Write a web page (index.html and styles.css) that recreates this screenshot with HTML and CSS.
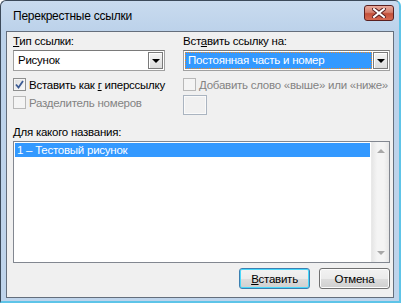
FILE: index.html
```html
<!DOCTYPE html>
<html lang="ru">
<head>
  <meta charset="UTF-8">
  <title>Перекрестные ссылки</title>
  <link rel="stylesheet" href="styles.css">
</head>
<body>
  <div class="window">
    <div class="titlebar">
      <span class="title">Перекрестные ссылки</span>
      <button class="close" type="button" aria-label="Закрыть">
        <svg width="14" height="10" viewBox="0 0 14 10">
          <path d="M2 1 L12 9 M12 1 L2 9" stroke="#5a2020" stroke-width="4" stroke-linecap="square"/>
          <path d="M2 1 L12 9 M12 1 L2 9" stroke="#fff" stroke-width="2" stroke-linecap="square"/>
        </svg>
      </button>
    </div>

    <div class="client">
      <div class="columns">
        <div class="col col-left">
          <div class="label"><u>Т</u>ип ссылки:</div>
          <div class="combo">
            <span class="combo-text">Рисунок</span>
            <span class="combo-btn"><span class="arrow"></span></span>
          </div>
          <label class="check">
            <span class="box checked">
              <svg width="9" height="9" viewBox="0 0 9 9"><path d="M1 4.5 L3.5 7.5 L8 1" fill="none" stroke="#3b5a93" stroke-width="1.8"/></svg>
            </span>
            Вставить как <u>г</u>иперссылку
          </label>
          <label class="check disabled">
            <span class="box"></span>
            Разделитель номеров
          </label>
        </div>

        <div class="col col-right">
          <div class="label">Вст<u>а</u>вить ссылку на:</div>
          <div class="combo">
            <span class="combo-text selected">Постоянная часть и номер</span>
            <span class="combo-btn"><span class="arrow"></span></span>
          </div>
          <label class="check disabled">
            <span class="box"></span>
            Добавить слово «выше» или «ниже»
          </label>
          <div class="spin-box"></div>
        </div>
      </div>

      <div class="label label-list"><u>Д</u>ля какого названия:</div>
      <div class="listbox">
        <div class="items">
          <div class="item active">1 – Тестовый рисунок</div>
        </div>
        <div class="scrollbar">
          <span class="sb-arrow up"></span>
          <span class="sb-arrow down"></span>
        </div>
      </div>

      <div class="actions">
        <button class="btn default" type="button"><u>В</u>ставить</button>
        <button class="btn" type="button">Отмена</button>
      </div>
    </div>
  </div>
</body>
</html>
```

FILE: styles.css
```css
/* Окно диалога */
body {
  margin: 0;
  background: #fff;
  font-family: "Liberation Sans", Arial, sans-serif;
  font-size: 11.5px;
  letter-spacing: -0.25px;
  color: #000;
}

.window {
  width: 398px;
  height: 300px;
  display: flex;
  flex-direction: column;
  background: linear-gradient(#c9dbef, #bcd2ea 30px, #bfd4eb);
  border: 1px solid #3c4a5a;
  border-bottom: 2px solid #5ec4e8;
  border-right: 2px solid #5ec4e8;
  border-radius: 6px 6px 0 0;
}

.titlebar {
  height: 30px;
  display: flex;
  align-items: center;
  justify-content: space-between;
  padding: 0 5px 0 12px;
}

.title {
  font-size: 12px;
  color: #000;
  margin-top: -1px;
}

.close {
  width: 30px;
  height: 16px;
  margin-top: -7px;
  padding: 0;
  border: 1px solid #5a2020;
  border-radius: 3px;
  background: linear-gradient(#e9a99b, #d5806e 45%, #c4503a 55%, #d66a52);
  display: flex;
  align-items: center;
  justify-content: center;
}

.client {
  flex: 1;
  margin: 0 5px 3px 5px;
  border: 1px solid #646e7c;
  background: #f0f0f0;
  padding: 2px 3px 0 6px;
  display: flex;
  flex-direction: column;
}

.columns {
  display: flex;
  gap: 18px;
}

.col-left {
  width: 152px;
}

.col-right {
  flex: 1;
  min-width: 0;
}

.label {
  line-height: 15px;
  height: 15px;
  margin-bottom: 1px;
}

/* Поле со списком */
.combo {
  height: 21px;
  box-sizing: border-box;
  border: 1px solid #a0a0a0;
  border-top-color: #7a7a7a;
  background: #fff;
  display: flex;
  align-items: stretch;
  padding: 1px;
}

.combo-text {
  flex: 1;
  line-height: 17px;
  padding-left: 3px;
  margin-right: 1px;
  white-space: nowrap;
}

.combo-text.selected {
  background: #3399ff;
  color: #fff;
  outline: 1px dotted #f08a24;
  outline-offset: -1px;
}

.combo-btn {
  width: 15px;
  box-sizing: border-box;
  border: 1px solid #7a7a7a;
  background: linear-gradient(#f4f4f4, #dcdcdc);
  box-shadow: inset 1px 1px 0 #fff;
  display: flex;
  align-items: center;
  justify-content: center;
}

.arrow {
  width: 0;
  height: 0;
  border-left: 4px solid transparent;
  border-right: 4px solid transparent;
  border-top: 4px solid #000;
}

/* Флажки */
.check {
  display: flex;
  align-items: center;
  gap: 3px;
  height: 13px;
  margin-top: 7px;
  white-space: nowrap;
}

.check + .check {
  margin-top: 5px;
}

.box {
  width: 13px;
  height: 13px;
  box-sizing: border-box;
  border: 1px solid #8e8f8f;
  background: linear-gradient(135deg, #dcdcdc, #fbfbfb);
  box-shadow: inset 0 0 0 1px #f4f4f4;
  display: flex;
  align-items: center;
  justify-content: center;
  flex: none;
}

.check.disabled {
  color: #838383;
}

.check.disabled .box {
  border-color: #b8b8b8;
  background: #f4f4f4;
  box-shadow: none;
}

.spin-box {
  width: 24px;
  height: 20px;
  box-sizing: border-box;
  margin-top: 4px;
  border: 1px solid #aab4c0;
  background: #f0f0f0;
  box-shadow: inset 0 0 0 1px #fafafa;
}

/* Список названий */
.label-list {
  margin-top: 10px;
  margin-bottom: 1px;
}

.listbox {
  height: 122px;
  box-sizing: border-box;
  border: 1px solid #828790;
  background: #fff;
  display: flex;
}

.items {
  flex: 1;
  padding: 1px;
}

.item {
  height: 14px;
  line-height: 14px;
  padding-left: 2px;
}

.item.active {
  background: #3399ff;
  color: #fff;
}

.scrollbar {
  width: 17px;
  background: linear-gradient(90deg, #e6e6e6, #f4f4f4 30%, #f4f4f4 70%, #e6e6e6);
  border-left: 1px solid #e9e9e9;
  display: flex;
  flex-direction: column;
  justify-content: space-between;
  align-items: center;
  padding: 7px 0;
}

.sb-arrow {
  width: 0;
  height: 0;
  border-left: 4px solid transparent;
  border-right: 4px solid transparent;
}

.sb-arrow.up {
  border-bottom: 4px solid #a8a8a8;
}

.sb-arrow.down {
  border-top: 4px solid #a8a8a8;
}

/* Кнопки */
.actions {
  display: flex;
  justify-content: flex-end;
  gap: 9px;
  margin-top: 5px;
}

.btn {
  width: 71px;
  height: 21px;
  padding: 0;
  font-family: inherit;
  font-size: inherit;
  letter-spacing: inherit;
  color: #000;
  border: 1px solid #707070;
  border-radius: 3px;
  background: linear-gradient(#f2f2f2, #ebebeb 50%, #dddddd 50%, #cfcfcf);
  box-shadow: inset 0 0 0 1px #fcfcfc;
}

.btn.default {
  border-color: #3c7fb1;
  box-shadow: inset 0 0 0 1px #48d8fb;
}
```
